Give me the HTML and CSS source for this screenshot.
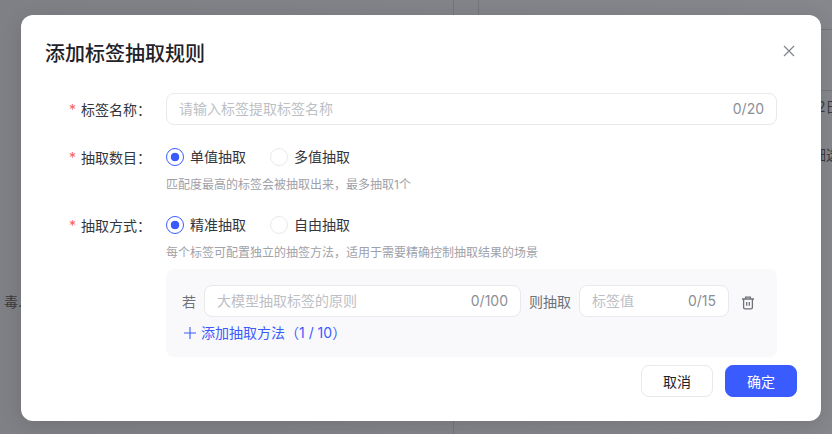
FILE: index.html
```html
<!DOCTYPE html>
<html lang="zh-CN">
<head>
    <meta charset="UTF-8">
    <title>添加标签抽取规则</title>
    <link rel="stylesheet" href="styles.css">
</head>
<body>
    <!-- page behind the mask -->
    <div class="backdrop">
        <span class="bg-line bg-line-a"></span>
        <span class="bg-line bg-line-b"></span>
        <span class="bg-line bg-line-c"></span>
        <span class="bg-line bg-line-d"></span>
        <span class="bg-line bg-line-e"></span>
        <span class="bg-text bg-text-a">毒.</span>
        <span class="bg-text bg-text-b">2日</span>
        <span class="bg-text bg-text-c">细选</span>
    </div>

    <div class="modal">
        <div class="modal-header">
            <p class="modal-title">添加标签抽取规则</p>
            <svg class="close-icon" width="14" height="14" viewBox="0 0 14 14">
                <path d="M2 2L12 12M12 2L2 12" fill="none" stroke="#82858c" stroke-width="1.2"></path>
            </svg>
        </div>

        <div class="form-row row-name">
            <label class="form-label"><i>*</i>标签名称：</label>
            <div class="form-body">
                <div class="input-box">
                    <span class="placeholder">请输入标签提取标签名称</span>
                    <span class="count">0/20</span>
                </div>
            </div>
        </div>

        <div class="form-row row-count">
            <label class="form-label"><i>*</i>抽取数目：</label>
            <div class="form-body">
                <div class="radio-group">
                    <span class="radio checked">单值抽取</span>
                    <span class="radio">多值抽取</span>
                </div>
                <p class="hint">匹配度最高的标签会被抽取出来，最多抽取1个</p>
            </div>
        </div>

        <div class="form-row row-method">
            <label class="form-label"><i>*</i>抽取方式：</label>
            <div class="form-body">
                <div class="radio-group">
                    <span class="radio checked">精准抽取</span>
                    <span class="radio">自由抽取</span>
                </div>
                <p class="hint">每个标签可配置独立的抽签方法，适用于需要精确控制抽取结果的场景</p>

                <div class="rule-panel">
                    <div class="rule-line">
                        <span class="rule-word">若</span>
                        <div class="input-box rule-input">
                            <span class="placeholder">大模型抽取标签的原则</span>
                            <span class="count">0/100</span>
                        </div>
                        <span class="rule-word">则抽取</span>
                        <div class="input-box value-input">
                            <span class="placeholder">标签值</span>
                            <span class="count">0/15</span>
                        </div>
                        <svg class="trash-icon" width="14" height="14" viewBox="0 0 14 14">
                            <path d="M1 3H13M4.6 3V1.2H9.4V3M2.6 3V11.4Q2.6 12.8 4 12.8H10Q11.4 12.8 11.4 11.4V3M5.7 6V9.8M8.3 6V9.8" fill="none" stroke="#6f7278" stroke-width="1.3"></path>
                        </svg>
                    </div>
                    <div class="add-line">
                        <svg width="12" height="12" viewBox="0 0 12 12">
                            <path d="M6 0V12M0 6H12" fill="none" stroke="#3a5cff" stroke-width="1.1"></path>
                        </svg>
                        <span>添加抽取方法（1 / 10）</span>
                    </div>
                </div>
            </div>
        </div>

        <div class="modal-footer">
            <button class="btn">取消</button>
            <button class="btn btn-primary">确定</button>
        </div>
    </div>
</body>
</html>
```

FILE: styles.css
```css
* {
    box-sizing: border-box;
}

body {
    margin: 0;
    width: 832px;
    height: 434px;
    overflow: hidden;
    background: linear-gradient(to right, #7f8085, #86878c);
    font-family: Inter, "Noto Sans CJK SC", sans-serif;
    font-size: 14px;
    color: #2b2e36;
}

.backdrop {
    position: absolute;
    top: 0;
    left: 0;
    width: 832px;
    height: 434px;
}

.bg-line {
    position: absolute;
    background: #74757a;
}

.bg-line-a {
    left: 453px;
    top: 0;
    width: 1px;
    height: 15px;
}

.bg-line-b {
    left: 478px;
    top: 0;
    width: 1px;
    height: 15px;
}

.bg-line-c {
    left: 821px;
    top: 29px;
    width: 11px;
    height: 1px;
}

.bg-line-d {
    left: 821px;
    top: 90px;
    width: 11px;
    height: 1px;
}

.bg-line-e {
    left: 453px;
    top: 421px;
    width: 1px;
    height: 13px;
}

.bg-text {
    position: absolute;
    font-size: 14px;
    line-height: 20px;
    color: #3a3b3f;
    white-space: nowrap;
}

.bg-text-a {
    left: 4px;
    top: 292px;
}

.bg-text-b {
    left: 817px;
    top: 97px;
}

.bg-text-c {
    left: 812px;
    top: 145px;
}

.modal {
    position: absolute;
    top: 15px;
    left: 21px;
    width: 800px;
    height: 406px;
    padding: 24px;
    background: #fff;
    border-radius: 12px;
    box-shadow: 0 4px 20px rgba(0, 0, 0, 0.12);
}

.modal-header {
    display: flex;
    justify-content: space-between;
    align-items: flex-start;
    height: 30px;
}

.modal-title {
    margin: 0;
    font-size: 20px;
    font-weight: 500;
    line-height: 30px;
    color: #1f2229;
}

.close-icon {
    margin-top: 5px;
    margin-right: 1px;
}

.form-row {
    display: flex;
}

.row-name {
    margin-top: 24px;
}

.row-count {
    margin-top: 20px;
}

.row-method {
    margin-top: 18px;
}

.form-label {
    display: flex;
    justify-content: flex-end;
    align-items: center;
    width: 121px;
    height: 32px;
    padding-right: 15px;
    color: #33363d;
    white-space: nowrap;
}

.row-count .form-label,
.row-method .form-label {
    height: 24px;
}

.form-label i {
    margin-right: 5px;
    font-style: normal;
    color: #f8625a;
}

.form-body {
    width: 611px;
}

.input-box {
    display: flex;
    justify-content: space-between;
    align-items: center;
    height: 32px;
    padding: 0 12px;
    background: #fff;
    border: 1px solid #e8e9ec;
    border-radius: 8px;
    line-height: 20px;
}

.placeholder {
    color: #bdbfc5;
}

.count {
    color: #8c8e95;
}

.radio-group {
    display: flex;
    gap: 24px;
    height: 24px;
}

.radio {
    display: flex;
    align-items: center;
    gap: 6px;
    line-height: 24px;
    color: #33363d;
}

.radio::before {
    content: "";
    width: 16px;
    height: 16px;
    border: 1px solid #e8e9ec;
    border-radius: 50%;
    background: #fff;
}

.radio.checked::before {
    border-color: #3a5cff;
    background: radial-gradient(circle, #3a5cff 0 4px, #fff 4.6px);
}

.hint {
    margin: 6px 0 0;
    font-size: 12px;
    line-height: 20px;
    color: #9fa1a8;
}

.rule-panel {
    height: 88px;
    margin-top: 6px;
    padding: 16px;
    background: #f9f9fb;
    border-radius: 8px;
}

.rule-line {
    display: flex;
    align-items: center;
    gap: 8px;
}

.rule-word {
    color: #6f7278;
    white-space: nowrap;
}

.rule-input {
    width: 317px;
}

.value-input {
    width: 150px;
}

.trash-icon {
    margin-left: 4px;
    margin-top: 4px;
}

.add-line {
    display: flex;
    align-items: center;
    gap: 5px;
    margin-top: 6px;
    padding-left: 2px;
    line-height: 20px;
    color: #3a5cff;
}

.modal-footer {
    display: flex;
    justify-content: flex-end;
    gap: 12px;
    margin-top: 8px;
}

.btn {
    width: 72px;
    height: 32px;
    padding: 0;
    background: #fff;
    border: 1px solid #e8e9ec;
    border-radius: 8px;
    font-family: inherit;
    font-size: 14px;
    color: #1f2229;
}

.btn-primary {
    background: #3a5cff;
    border-color: #3a5cff;
    color: #fff;
}
```
